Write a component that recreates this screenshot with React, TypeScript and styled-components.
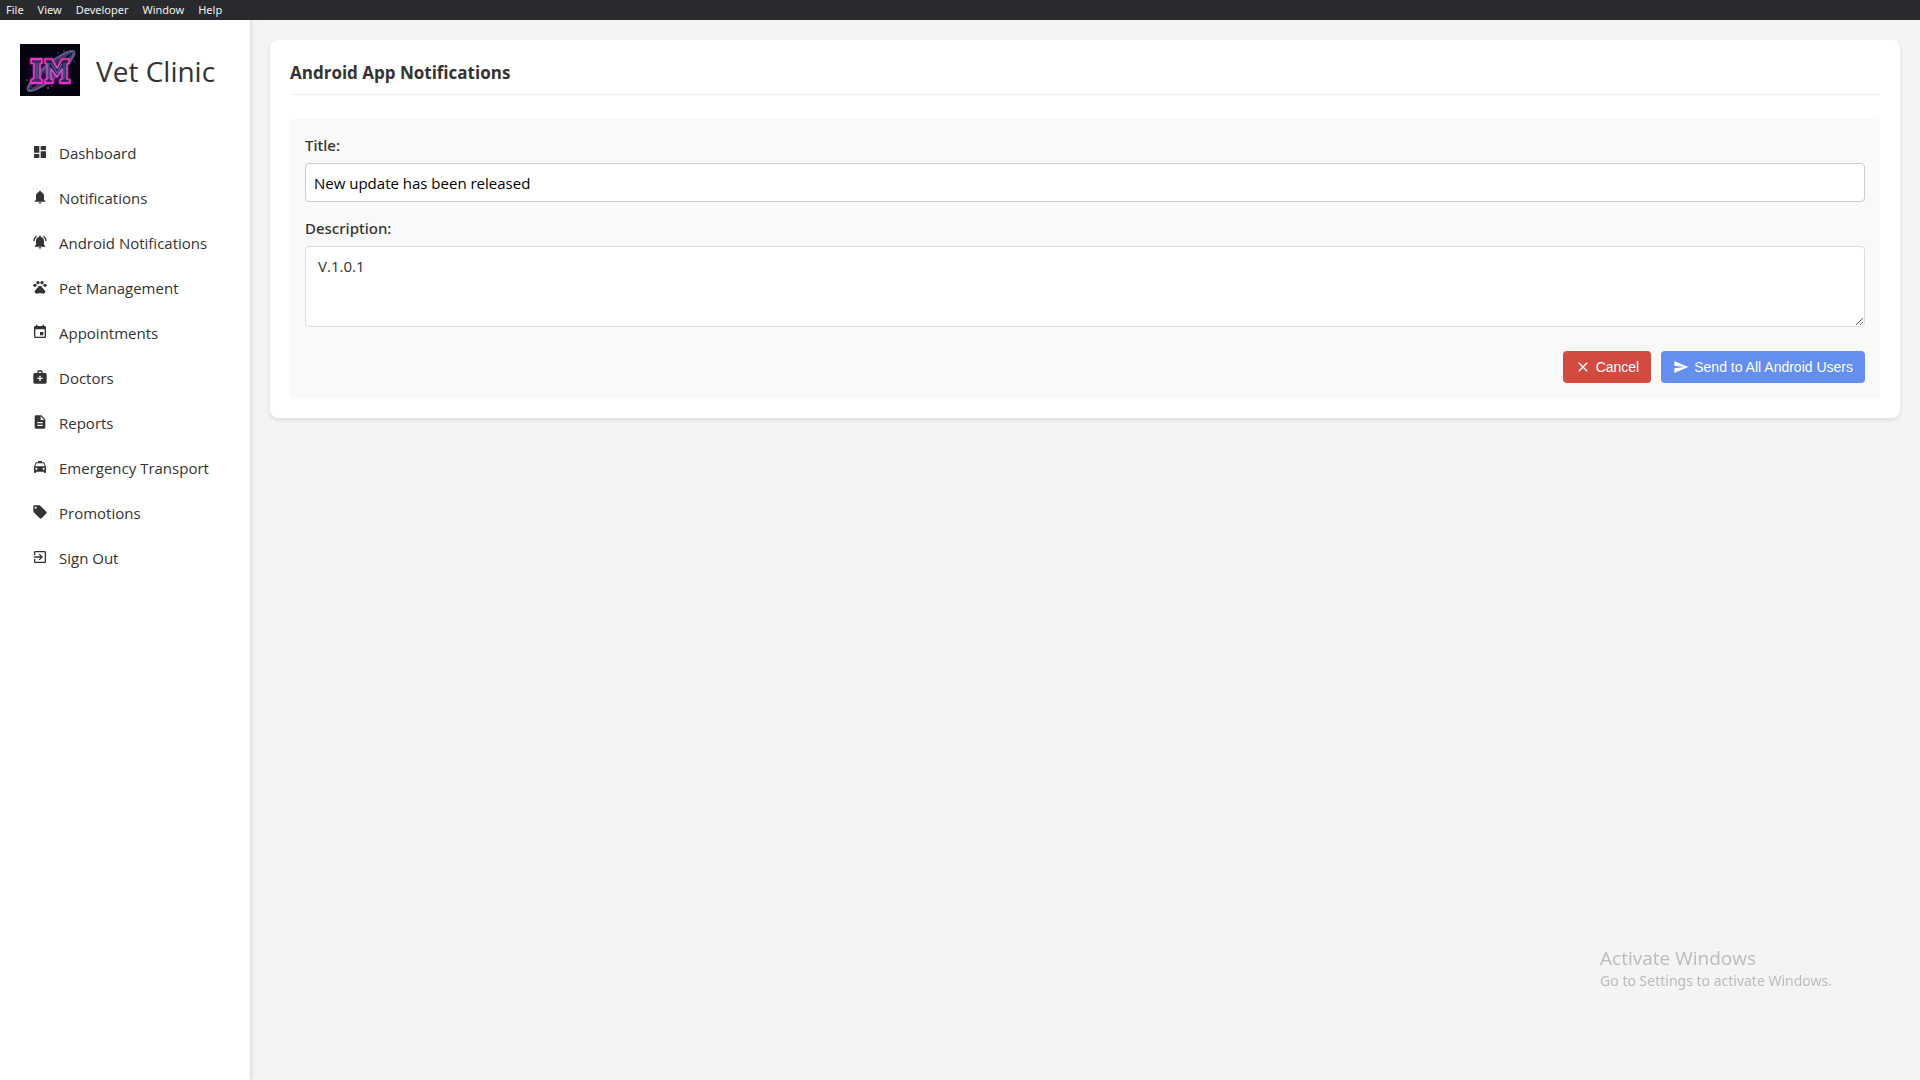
import React, { useState } from "react";
import styled, { createGlobalStyle } from "styled-components";
import {
  MdClose,
  MdDashboard,
  MdDescription,
  MdEvent,
  MdExitToApp,
  MdLocalOffer,
  MdLocalTaxi,
  MdMedicalServices,
  MdNotifications,
  MdNotificationsActive,
  MdPets,
  MdSend,
} from "react-icons/md";

const GlobalStyle = createGlobalStyle`
  *, *::before, *::after { box-sizing: border-box; }
  body {
    margin: 0;
    background: #f4f4f4;
    color: #333;
    font-family: "Segoe UI", "Open Sans", "Noto Sans", sans-serif;
    font-size: 15px;
  }
`;

const Shell = styled.div`
  display: flex;
  flex-direction: column;
  min-height: 100vh;
`;

const MenuBar = styled.div`
  display: flex;
  gap: 2px;
  height: 20px;
  background: #292a2d;
`;

const MenuButton = styled.button`
  padding: 0 6px;
  border: 0;
  background: none;
  color: #f1f1f1;
  font: 400 11px/20px "Segoe UI", "Noto Sans", sans-serif;
`;

const Body = styled.div`
  display: flex;
  flex: 1;
`;

const Sidebar = styled.aside`
  flex: 0 0 250px;
  padding: 24px 20px;
  background: #fff;
  box-shadow: 2px 0 5px rgba(0, 0, 0, 0.1);
`;

const Brand = styled.div`
  display: flex;
  align-items: center;
  gap: 16px;
  margin-bottom: 34px;
`;

const BrandName = styled.h1`
  margin: 0;
  padding-top: 2px;
  font-size: 28px;
  font-weight: 500;
  line-height: 50px;
  white-space: nowrap;
`;

const NavList = styled.ul`
  display: flex;
  flex-direction: column;
  margin: 0;
  padding: 0;
  list-style: none;
`;

const NavLink = styled.a`
  display: flex;
  align-items: center;
  gap: 11px;
  height: 45px;
  padding-left: 12px;
  color: #333;
  font-weight: 400;
  text-decoration: none;
  white-space: nowrap;

  svg {
    margin-bottom: 2px;
  }
`;

const Main = styled.main`
  flex: 1;
  min-width: 0;
  padding: 20px;
`;

const Card = styled.section`
  padding: 20px;
  border-radius: 8px;
  background: #fff;
  box-shadow: 0 2px 4px rgba(0, 0, 0, 0.1);
`;

const CardTitle = styled.h2`
  margin: 0 0 24px;
  padding-bottom: 8px;
  border-bottom: 1px solid #eee;
  font-size: 17px;
  font-weight: 700;
  line-height: 26px;
`;

const Form = styled.form`
  display: flex;
  flex-direction: column;
  padding: 15px;
  border-radius: 4px;
  background: #f9f9f9;
`;

const Label = styled.label`
  margin-bottom: 7px;
  font-family: "Segoe UI", "Noto Sans", sans-serif;
  font-weight: 500;
  line-height: 22px;
`;

const TextInput = styled.input`
  height: 39px;
  margin-bottom: 15px;
  padding: 0 8px;
  border: 1px solid #ccc;
  border-radius: 4px;
  background: #fff;
  color: #000;
  font: 400 15px/20px "Segoe UI", "Open Sans", "Noto Sans", sans-serif;
`;

const TextArea = styled.textarea`
  height: 81px;
  margin-bottom: 24px;
  padding: 8px 12px;
  border: 1px solid #ddd;
  border-radius: 4px;
  background: #fff;
  color: #333;
  font: 400 15px/22px "Segoe UI", "Open Sans", "Noto Sans", sans-serif;
  resize: vertical;
`;

const Actions = styled.div`
  display: flex;
  justify-content: flex-end;
  gap: 10px;
`;

const ActionButton = styled.button<{ $color: string }>`
  display: flex;
  align-items: center;
  gap: 5px;
  height: 32px;
  padding: 0 12px;
  border: 0;
  border-radius: 4px;
  background: ${({ $color }) => $color};
  color: #fff;
  font: 400 14px/16px Arial, "Liberation Sans", sans-serif;
`;

const Watermark = styled.div`
  position: fixed;
  right: 88px;
  bottom: 89px;
  color: #bbb;
  font-family: "Segoe UI", "Noto Sans", sans-serif;
  font-size: 14px;
  line-height: 20px;
  pointer-events: none;
`;

const WatermarkTitle = styled.div`
  font-family: "Segoe UI", "Open Sans", sans-serif;
  font-size: 19px;
  line-height: 25px;
`;

const LogoArt = styled.svg`
  display: block;
  flex: none;
`;

const Logo = () => (
  <LogoArt width="60" height="52" viewBox="0 0 60 52" role="img" aria-label="IM logo">
    <defs>
      <radialGradient id="glow">
        <stop offset="0" stopColor="#6a1290" stopOpacity="0.6" />
        <stop offset="0.6" stopColor="#3d0a5a" stopOpacity="0.4" />
        <stop offset="1" stopColor="#04030f" stopOpacity="0" />
      </radialGradient>
      <linearGradient id="edge" x1="0" y1="0" x2="0" y2="1">
        <stop offset="0" stopColor="#f03ab4" />
        <stop offset="0.5" stopColor="#a565c0" />
        <stop offset="1" stopColor="#f52bd0" />
      </linearGradient>
    </defs>
    <rect width="60" height="52" fill="#04030f" />
    <ellipse cx="30" cy="27" rx="28" ry="19" fill="url(#glow)" />
    <g fill="none" transform="rotate(-40 31 27)">
      <ellipse cx="31" cy="27" rx="30" ry="7" stroke="#59648f" strokeWidth="2" />
      <ellipse cx="31" cy="27" rx="28" ry="5" stroke="#70508c" strokeWidth="1" />
      <ellipse cx="31" cy="27" rx="26" ry="3" stroke="#33486b" strokeWidth="1" />
    </g>
    <g stroke="#c01a95" strokeOpacity="0.35" strokeWidth="4" strokeLinejoin="round">
      <path fill="#3a2d66" d="M11 15H22V19L20 20V34L22 36V39H11V36L14 34V20L11 19Z" />
      <path fill="#1b2247" d="M25 15H32L37 24L42 15H49V19L47 20V35L50 36V39H40V36L42 35V25L37 33L31 25V35L33 36V39H25V36L27 35V20L25 19Z" />
    </g>
    <g fill="none" stroke="url(#edge)" strokeWidth="1.6" strokeLinejoin="round">
      <path d="M11 15H22V19L20 20V34L22 36V39H11V36L14 34V20L11 19Z" />
      <path d="M25 15H32L37 24L42 15H49V19L47 20V35L50 36V39H40V36L42 35V25L37 33L31 25V35L33 36V39H25V36L27 35V20L25 19Z" />
    </g>
    <path d="M17 19V35M29 19V35M44 19V35M31 19L37 29L42 20" fill="none" stroke="#6681b5" strokeWidth="0.8" />
    <path d="M11 39H22M25 39H33M40 39H50M11 15H22" stroke="#fb35d1" strokeWidth="1.6" />
    <g fill="#5967a0">
      <circle cx="12" cy="46" r="0.8" />
      <circle cx="28" cy="44" r="1" />
      <circle cx="32" cy="42" r="0.7" />
      <circle cx="38" cy="9" r="0.7" />
      <circle cx="44" cy="7" r="0.8" />
      <circle cx="54" cy="17" r="0.7" />
      <circle cx="7" cy="36" r="0.7" />
    </g>
  </LogoArt>
);

const menus = ["File", "View", "Developer", "Window", "Help"];

const navItems = [
  { label: "Dashboard", Icon: MdDashboard },
  { label: "Notifications", Icon: MdNotifications },
  { label: "Android Notifications", Icon: MdNotificationsActive },
  { label: "Pet Management", Icon: MdPets },
  { label: "Appointments", Icon: MdEvent },
  { label: "Doctors", Icon: MdMedicalServices },
  { label: "Reports", Icon: MdDescription },
  { label: "Emergency Transport", Icon: MdLocalTaxi },
  { label: "Promotions", Icon: MdLocalOffer },
  { label: "Sign Out", Icon: MdExitToApp },
];

export default function App() {
  const [title, setTitle] = useState("New update has been released");
  const [description, setDescription] = useState("V.1.0.1");

  return (
    <Shell>
      <GlobalStyle />
      <MenuBar>
        {menus.map((name) => (
          <MenuButton key={name} type="button">{name}</MenuButton>
        ))}
      </MenuBar>
      <Body>
        <Sidebar>
          <Brand>
            <Logo />
            <BrandName>Vet Clinic</BrandName>
          </Brand>
          <nav>
            <NavList>
              {navItems.map(({ label, Icon }) => (
                <li key={label}>
                  <NavLink href="#">
                    <Icon size={16} />
                    {label}
                  </NavLink>
                </li>
              ))}
            </NavList>
          </nav>
        </Sidebar>
        <Main>
          <Card>
            <CardTitle>Android App Notifications</CardTitle>
            <Form onSubmit={(event) => event.preventDefault()}>
              <Label htmlFor="title">Title:</Label>
              <TextInput id="title" type="text" value={title} onChange={(event) => setTitle(event.target.value)} />
              <Label htmlFor="description">Description:</Label>
              <TextArea id="description" value={description} onChange={(event) => setDescription(event.target.value)} />
              <Actions>
                <ActionButton type="button" $color="#d14b41">
                  <MdClose size={16} />
                  Cancel
                </ActionButton>
                <ActionButton type="submit" $color="#648eef">
                  <MdSend size={16} />
                  Send to All Android Users
                </ActionButton>
              </Actions>
            </Form>
          </Card>
        </Main>
      </Body>
      <Watermark>
        <WatermarkTitle>Activate Windows</WatermarkTitle>
        Go to Settings to activate Windows.
      </Watermark>
    </Shell>
  );
}
